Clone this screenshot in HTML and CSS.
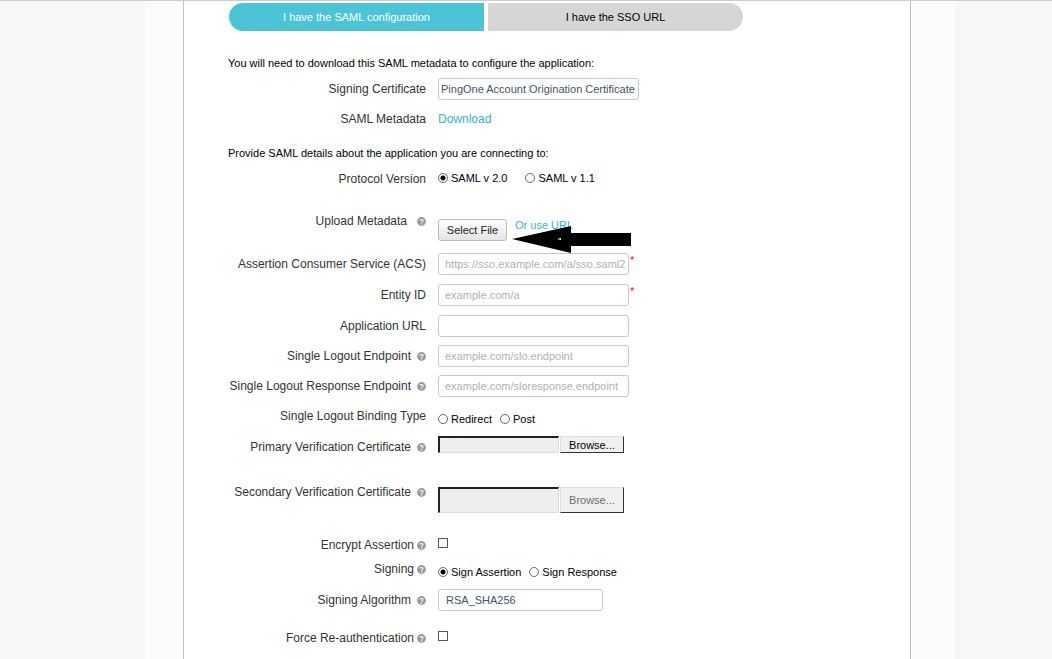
FILE: index.html
```
<!DOCTYPE html>
<html lang="en">
<head>
<meta charset="utf-8">
<title>SAML configuration</title>
<link rel="stylesheet" href="styles.css">
</head>
<body>
<svg class="defs" aria-hidden="true">
  <symbol id="help" viewBox="0 0 9 9">
    <circle cx="4.5" cy="4.5" r="4.4" fill="#999"/>
    <path d="M3 3.6C3 2.1 6.1 2.1 6.1 3.6C6.1 4.4 4.6 4.5 4.6 5.4" fill="none" stroke="#fff" stroke-width="1.1"/>
    <path d="M4 6.2h1.2v1.2H4z" fill="#fff"/>
  </symbol>
</svg>
<div class="page">
  <div class="wrapper">
    <main class="panel">
      <div class="tabs">
        <button class="tab tab-active" type="button">I have the SAML configuration</button>
        <button class="tab" type="button">I have the SSO URL</button>
      </div>
      <form class="form">
        <p class="note">You will need to download this SAML metadata to configure the application:</p>
        <div class="row">
          <label class="name" for="cert">Signing Certificate</label>
          <select class="control select select-wide" id="cert"><option>PingOne Account Origination Certificate</option></select>
        </div>
        <div class="row">
          <span class="name">SAML Metadata</span>
          <a class="link" href="#">Download</a>
        </div>
        <p class="note note-second">Provide SAML details about the application you are connecting to:</p>
        <div class="row row-protocol">
          <span class="name" id="protocol">Protocol Version</span>
          <div class="options options-wide" role="radiogroup" aria-labelledby="protocol">
            <label class="option"><input class="radio" type="radio" name="protocol" checked>SAML v 2.0</label>
            <label class="option"><input class="radio" type="radio" name="protocol">SAML v 1.1</label>
          </div>
        </div>
        <div class="row row-upload">
          <span class="name name-loose">Upload Metadata<svg class="help"><use href="#help"/></svg></span>
          <div class="upload">
            <button class="select-file" type="button">Select File</button>
            <a class="small-link" href="#">Or use URL</a>
            <svg class="arrow" viewBox="0 0 119 27" aria-hidden="true"><path d="M0 13L59 0V7H119V20H59V27Z"/><path d="M45 13l4-1v2z" fill="#fff"/></svg>
          </div>
        </div>
        <div class="row row-roomy">
          <label class="name" for="acs">Assertion Consumer Service (ACS)</label>
          <div class="required"><input class="control" id="acs" type="text" placeholder="https://sso.example.com/a/sso.saml2" required><span class="star">*</span></div>
        </div>
        <div class="row row-roomy">
          <label class="name" for="entity">Entity ID</label>
          <div class="required"><input class="control" id="entity" type="text" placeholder="example.com/a" required><span class="star">*</span></div>
        </div>
        <div class="row">
          <label class="name" for="app-url">Application URL</label>
          <input class="control" id="app-url" type="text">
        </div>
        <div class="row">
          <label class="name" for="slo">Single Logout Endpoint<svg class="help"><use href="#help"/></svg></label>
          <input class="control" id="slo" type="text" placeholder="example.com/slo.endpoint">
        </div>
        <div class="row">
          <label class="name" for="slo-response">Single Logout Response Endpoint<svg class="help"><use href="#help"/></svg></label>
          <input class="control" id="slo-response" type="text" placeholder="example.com/sloresponse.endpoint">
        </div>
        <div class="row row-roomy">
          <span class="name" id="binding">Single Logout Binding Type</span>
          <div class="options options-low" role="radiogroup" aria-labelledby="binding">
            <label class="option"><input class="radio" type="radio" name="binding">Redirect</label>
            <label class="option"><input class="radio" type="radio" name="binding">Post</label>
          </div>
        </div>
        <div class="row row-primary">
          <label class="name" for="primary">Primary Verification Certificate<svg class="help"><use href="#help"/></svg></label>
          <div class="file">
            <input class="file-name" id="primary" type="text" readonly>
            <button class="browse" type="button">Browse...</button>
          </div>
        </div>
        <div class="row row-secondary">
          <label class="name" for="secondary">Secondary Verification Certificate<svg class="help"><use href="#help"/></svg></label>
          <div class="file file-large">
            <input class="file-name" id="secondary" type="text" disabled>
            <button class="browse" type="button" disabled>Browse...</button>
          </div>
        </div>
        <div class="row row-compact">
          <label class="name name-tight" for="encrypt">Encrypt Assertion<svg class="help"><use href="#help"/></svg></label>
          <input class="check" id="encrypt" type="checkbox">
        </div>
        <div class="row row-roomy">
          <span class="name name-tight" id="signing">Signing<svg class="help"><use href="#help"/></svg></span>
          <div class="options options-low" role="radiogroup" aria-labelledby="signing">
            <label class="option"><input class="radio" type="radio" name="signing" checked>Sign Assertion</label>
            <label class="option"><input class="radio" type="radio" name="signing">Sign Response</label>
          </div>
        </div>
        <div class="row row-algorithm">
          <label class="name" for="algorithm">Signing Algorithm<svg class="help"><use href="#help"/></svg></label>
          <select class="control select select-short" id="algorithm"><option>RSA_SHA256</option></select>
        </div>
        <div class="row">
          <label class="name name-tight" for="force">Force Re-authentication<svg class="help"><use href="#help"/></svg></label>
          <input class="check" id="force" type="checkbox">
        </div>
      </form>
    </main>
  </div>
</div>
</body>
</html>
```
FILE: styles.css
```
* {
  box-sizing: border-box;
}

body {
  margin: 0;
  background: #f7f7f7;
  color: #000;
  font: 11px/20px "Liberation Sans", Arial, sans-serif;
}

button,
input,
select {
  margin: 0;
  font: inherit;
}

a {
  color: #2fb5c7;
  text-decoration: none;
}

.defs {
  display: none;
}

.page {
  display: grid;
  grid-template-columns: 145fr minmax(0, 810px) 97fr;
  min-height: 100vh;
  border-top: 1px solid #ccc;
}

.wrapper {
  grid-column: 2;
  display: flex;
  padding: 0 44px 0 38px;
  background: #fcfcfc;
}

.panel {
  flex: 1;
  padding: 2px 44px 0;
  border: solid #c3c3c3;
  border-width: 0 1px;
  background: #fff;
}

.tabs {
  display: grid;
  grid-template-columns: 255px 255px;
  gap: 4px;
  padding-left: 1px;
}

.tab {
  height: 28px;
  padding: 0;
  border: 0;
  border-radius: 0 14px 14px 0;
  background: #d6d6d6;
  color: #000;
}

.tab-active {
  border-radius: 14px 0 0 14px;
  background: #4bc5d5;
  color: #fff;
}

.note {
  margin: 22px 0 5px;
}

.note-second {
  margin-top: 5px;
}

.row {
  display: grid;
  grid-template-columns: 198px 1fr;
  column-gap: 12px;
  align-items: start;
  justify-items: start;
  min-height: 30px;
}

.row-compact {
  min-height: 24px;
}

.row-roomy {
  min-height: 31px;
}

.row-algorithm {
  min-height: 38px;
}

.row-protocol {
  min-height: 42px;
}

.row-upload {
  min-height: 43px;
}

.row-primary {
  min-height: 45px;
}

.row-secondary {
  min-height: 53px;
}

.name {
  display: flex;
  align-items: center;
  justify-self: end;
  gap: 6px;
  color: #333;
  font-size: 12px;
  line-height: 22px;
  white-space: nowrap;
}

.name-tight {
  gap: 3px;
}

.name-loose {
  gap: 10px;
}

.help {
  width: 9px;
  height: 9px;
  margin-top: 1px;
}

.link {
  font-size: 12px;
  line-height: 22px;
}

.control {
  width: 191px;
  height: 22px;
  padding: 0 2px 0 6px;
  border: 1px solid #c8c8c8;
  border-radius: 3px;
  background: #fff;
  color: #3f5468;
}

.control::placeholder {
  color: #b0b0b0;
}

.select {
  appearance: none;
  padding: 0 7px;
}

.select-wide {
  width: 201px;
  padding: 0 2px;
}

.select-short {
  width: 165px;
}

.required {
  display: flex;
  gap: 1px;
}

.star {
  color: #d0202f;
  line-height: 14px;
}

.options {
  display: flex;
  gap: 8px;
}

.options-wide {
  gap: 18px;
}

.options-low {
  padding-top: 4px;
}

.option {
  display: flex;
  align-items: center;
  gap: 3px;
}

.radio {
  appearance: none;
  width: 10px;
  height: 10px;
  border: 1px solid #666;
  border-radius: 50%;
  background: #fff;
}

.radio:checked {
  background: radial-gradient(circle, #000 2px, #fff 3px);
}

.check {
  appearance: none;
  width: 10px;
  height: 10px;
  margin-top: 4px;
  border: 1px solid #555;
  background: #fff;
}

.upload {
  position: relative;
  display: flex;
  align-items: flex-start;
  gap: 8px;
  padding-top: 9px;
}

.select-file {
  width: 69px;
  height: 22px;
  padding: 0;
  border: 1px solid #bbb;
  border-radius: 3px;
  background: linear-gradient(#fff, #e4e4e4);
  color: #222;
}

.small-link {
  line-height: 12px;
}

/* Pointer drawn over the upload controls */
.arrow {
  position: absolute;
  top: 16px;
  left: 74px;
  width: 119px;
  height: 27px;
}

.file {
  display: flex;
  gap: 1px;
  height: 17px;
}

.file-large {
  height: 26px;
  margin-top: 6px;
}

.file-name {
  width: 121px;
  border: solid;
  border-width: 2px 1px 1px 2px;
  border-color: #222 #ddd #ddd #222;
  background: #eee;
}

.browse {
  width: 64px;
  padding: 0;
  border: 1px solid;
  border-color: #ddd #333 #333 #ddd;
  background: #f0f0f0;
  color: #000;
  line-height: 14px;
}

.browse:disabled {
  color: #6d6d6d;
}
```
